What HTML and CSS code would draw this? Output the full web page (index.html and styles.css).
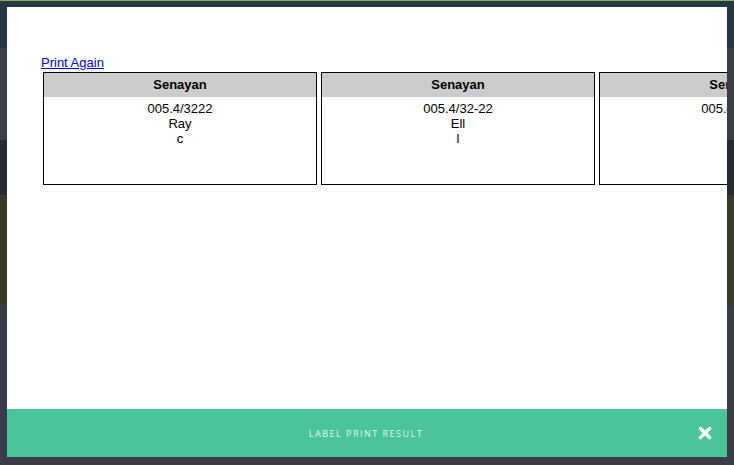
FILE: index.html
```html
<!DOCTYPE html>
<html>
<head>
<meta charset="utf-8">
<link rel="stylesheet" href="styles.css">
</head>
<body>
<div class="backdrop">
  <div class="band band-line"></div>
  <div class="band band-teal"></div>
  <div class="band band-gray"></div>
  <div class="band band-dark"></div>
  <div class="band band-olive"></div>
  <div class="band band-bottom"></div>
</div>
<div class="modal">
  <div class="modal-body">
    <a class="print-again" href="#">Print Again</a>
    <div class="labels">
      <div class="label">
        <div class="label-head">Senayan</div>
        <div class="label-text">005.4/3222<br>Ray<br>c</div>
      </div>
      <div class="label">
        <div class="label-head">Senayan</div>
        <div class="label-text">005.4/32-22<br>Ell<br>l</div>
      </div>
      <div class="label">
        <div class="label-head">Senayan</div>
        <div class="label-text">005.4/32-22<br>Ell<br>l</div>
      </div>
    </div>
  </div>
  <div class="modal-foot">
    <span class="foot-title">LABEL PRINT RESULT</span>
    <svg class="close" width="14" height="14" viewBox="0 0 14 14">
      <path d="M2.5 2.5 L11.5 11.5 M11.5 2.5 L2.5 11.5" stroke="#ffffff" stroke-width="3.6" stroke-linecap="round" fill="none"/>
    </svg>
  </div>
</div>
</body>
</html>
```
FILE: styles.css
```css
html, body {
  margin: 0;
  padding: 0;
  width: 734px;
  height: 465px;
  overflow: hidden;
}
body {
  position: relative;
  background: #3a3d47;
  font-family: "Liberation Sans", Arial, sans-serif;
}
.backdrop {
  display: flex;
  flex-direction: column;
  height: 465px;
}
.band-line { height: 1px; background: #8bab66; }
.band-teal { height: 47px; background: #243944; }
.band-gray { height: 92px; background: #3a3e47; }
.band-dark { height: 55px; background: #262a33; }
.band-olive { height: 110px; background: #3a3a2b; }
.band-bottom { flex: 1; background: #3a3d47; }

.modal {
  position: absolute;
  left: 7px;
  top: 7px;
  width: 720px;
  height: 450px;
  background: #ffffff;
  display: flex;
  flex-direction: column;
}
.modal-body {
  flex: 1;
  overflow: hidden;
  padding: 48px 0 0 34px;
}
.print-again {
  display: block;
  width: max-content;
  font-size: 13px;
  line-height: 15px;
  color: #0000ee;
  text-decoration: underline;
}
.labels {
  display: flex;
  gap: 4px;
  margin: 2px 0 0 2px;
}
.label {
  flex: 0 0 auto;
  width: 272px;
  height: 111px;
  border: 1px solid #000000;
  text-align: center;
  font-size: 13px;
  color: #000000;
}
.label-head {
  height: 24px;
  line-height: 24px;
  background: #cccccc;
  font-weight: bold;
}
.label-text {
  padding-top: 4px;
  line-height: 15px;
}
.modal-foot {
  height: 48px;
  flex: 0 0 48px;
  background: #4ac59b;
  display: flex;
  align-items: center;
  justify-content: center;
  position: relative;
}
.foot-title {
  font-family: "Open Sans", sans-serif;
  font-size: 9px;
  letter-spacing: 1.5px;
  color: #e4f6ef;
  margin-right: 2px;
}
.close {
  position: absolute;
  right: 15px;
  top: 17px;
}
```
